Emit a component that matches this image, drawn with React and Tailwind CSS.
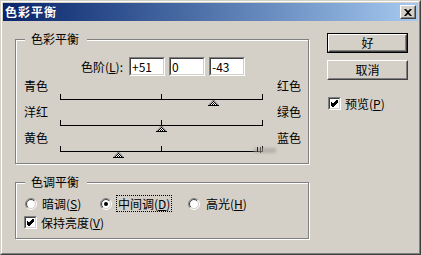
const font = "font-['Noto_Sans_CJK_SC','Liberation_Sans',sans-serif]";

function Sunken({ className = "", children }) {
  return (
    <div className={`border border-t-[#808080] border-l-[#808080] border-r-white border-b-white ${className}`}>
      <div className="w-full h-full border border-t-[#404040] border-l-[#404040] border-r-[#d4d0c8] border-b-[#d4d0c8] bg-white">
        {children}
      </div>
    </div>
  );
}

function CheckBox() {
  return (
    <Sunken className="w-[13px] h-[13px] shrink-0">
      <svg width="9" height="9" viewBox="0 0 9 9" className="block">
        <path d="M1 3.5 L3 5.5 L7.5 1 M1 4.5 L3 6.5 L7.5 2 M1 5.5 L3 7.5 L7.5 3" stroke="#000" strokeWidth="1" fill="none" shapeRendering="crispEdges" />
      </svg>
    </Sunken>
  );
}

function Radio({ on }) {
  return (
    <svg width="12" height="12" viewBox="0 0 12 12" className="block shrink-0">
      <defs>
        <linearGradient id="rOut" x1="0" y1="0" x2="1" y2="1">
          <stop offset="0.5" stopColor="#808080" />
          <stop offset="0.5" stopColor="#ffffff" />
        </linearGradient>
        <linearGradient id="rIn" x1="0" y1="0" x2="1" y2="1">
          <stop offset="0.5" stopColor="#404040" />
          <stop offset="0.5" stopColor="#d4d0c8" />
        </linearGradient>
      </defs>
      <circle cx="6" cy="6" r="5.5" fill="none" stroke="url(#rOut)" />
      <circle cx="6" cy="6" r="4.5" fill="#fff" stroke="url(#rIn)" />
      {on && <circle cx="6" cy="6" r="2" fill="#000" />}
    </svg>
  );
}

function Button({ label, isDefault }) {
  return (
    <div className={`w-[81px] h-[20px] ${isDefault ? "border border-black" : ""}`}>
      <div className="w-full h-full border border-t-white border-l-white border-r-[#404040] border-b-[#404040]">
        <div className="w-full h-full border border-t-[#d4d0c8] border-l-[#d4d0c8] border-r-[#808080] border-b-[#808080] flex items-center justify-center text-[12px] leading-[14px] text-black">
          {label}
        </div>
      </div>
    </div>
  );
}

function Thumb() {
  return (
    <svg width="11" height="6" viewBox="0 0 11 6" className="block">
      <defs>
        <pattern id="dith" width="2" height="2" patternUnits="userSpaceOnUse">
          <rect width="2" height="2" fill="#ffffff" />
          <rect width="1" height="1" fill="#000" />
          <rect x="1" y="1" width="1" height="1" fill="#000" />
        </pattern>
      </defs>
      <polygon points="5.5,0 11,6 0,6" fill="url(#dith)" />
      <polygon points="5.5,0 11,6 0,6" fill="none" stroke="#333" strokeWidth="0.6" />
      <rect x="0" y="5" width="11" height="1" fill="#000" />
    </svg>
  );
}

function Slider({ left, right, value, smudge }) {
  const pos = Math.round(101 + (value / 100) * 101);
  return (
    <div className="h-[26px]">
      <div className="flex justify-between pl-[8px] pr-[7px] h-[14px] leading-[14px]">
        <span>{left}</span>
        <span>{right}</span>
      </div>
      <div className="relative ml-[44px] w-[203px] h-[12px]">
        <div className="absolute left-0 top-[1px] w-[203px] h-[6px] border-l border-r border-b border-black" />
        <div className="absolute left-[101px] top-[1px] w-px h-[5px] bg-black" />
        <div className="absolute top-[7px]" style={{ left: pos - 5 }}>
          <Thumb />
        </div>
        {smudge && (
          <>
            <div className="absolute left-[194px] top-[3px] w-[22px] h-[5px] bg-[#a8a49c] blur-[1.5px] opacity-70" />
            <div className="absolute left-[197px] top-[2px] w-px h-[5px] bg-[#222]" />
            <div className="absolute left-[200px] top-[2px] w-px h-[6px] bg-[#555]" />
          </>
        )}
      </div>
    </div>
  );
}

function Group({ title, className = "", children }) {
  return (
    <div className={`relative border border-[#808080] shadow-[1px_1px_0_#ffffff,inset_1px_1px_0_#ffffff] ${className}`}>
      <span className="absolute left-[9px] -top-[8px] pl-[6px] pr-[8px] h-[14px] leading-[14px] bg-[#d4d0c8]">{title}</span>
      {children}
    </div>
  );
}

export default function App() {
  return (
    <div className={`${font} w-[421px] h-[255px] bg-[#d4d0c8] text-[12px] text-black border border-t-[#d4d0c8] border-l-[#d4d0c8] border-r-[#404040] border-b-[#404040]`}>
      <div className="w-full h-full border border-t-white border-l-white border-r-[#808080] border-b-[#808080] p-px">
        <div className="h-[18px] flex items-center justify-between bg-linear-to-r from-[#0a246a] to-[#a6caf0]">
          <span className="ml-[2px] text-white font-bold text-[12px] leading-[14px] tracking-[1px]">色彩平衡</span>
          <div className="mr-[2px] w-[16px] h-[14px] border border-t-white border-l-white border-r-[#404040] border-b-[#404040] bg-[#d4d0c8]">
            <div className="w-full h-full border border-t-[#d4d0c8] border-l-[#d4d0c8] border-r-[#808080] border-b-[#808080] flex items-center justify-center">
              <svg width="8" height="7" viewBox="0 0 8 7" className="block">
                <path d="M0 0h2l2 2 2-2h2L5 3.5 8 7H6L4 5 2 7H0l3-3.5z" fill="#000" />
              </svg>
            </div>
          </div>
        </div>

        <div className="flex">
          <div className="ml-[12px] w-[294px]">
            <Group title="色彩平衡" className="mt-[18px] h-[125px]">
              <div className="flex items-center mt-[17px] h-[19px]">
                <span className="w-[107px] text-right leading-[14px]">
                  色阶(<u>L</u>):
                </span>
                <div className="flex gap-[4px] ml-[6px]">
                  {["+51", "0", "-43"].map((v) => (
                    <Sunken key={v} className="w-[36px] h-[19px]">
                      <div className="pl-[1px] leading-[15px]">{v}</div>
                    </Sunken>
                  ))}
                </div>
              </div>
              <div className="mt-[3px]">
                <Slider left="青色" right="红色" value={51} />
                <Slider left="洋红" right="绿色" value={0} />
                <Slider left="黄色" right="蓝色" value={-43} smudge />
              </div>
            </Group>

            <Group title="色调平衡" className="mt-[18px] h-[57px]">
              <div className="flex items-center mt-[12px] h-[17px] pl-[9px]">
                <div className="w-[75px] flex items-center gap-[3px]">
                  <Radio />
                  <span className="border border-transparent px-px leading-[14px]">暗调(<u>S</u>)</span>
                </div>
                <div className="w-[88px] flex items-center gap-[4px]">
                  <Radio on />
                  <span className="border border-dotted border-black px-px leading-[15px]">中间调(<u>D</u>)</span>
                </div>
                <div className="flex items-center gap-[4px]">
                  <Radio />
                  <span className="border border-transparent px-px leading-[14px]">高光(<u>H</u>)</span>
                </div>
              </div>
              <div className="flex items-center gap-[4px] mt-[4px] h-[13px] pl-[8px]">
                <CheckBox />
                <span className="leading-[14px]">保持亮度(<u>V</u>)</span>
              </div>
            </Group>
          </div>

          <div className="ml-[18px] mt-[12px] flex flex-col">
            <Button label="好" isDefault />
            <div className="mt-[7px]">
              <Button label="取消" />
            </div>
            <div className="mt-[17px] ml-px flex items-center gap-[4px] h-[13px]">
              <CheckBox />
              <span className="leading-[14px]">预览(<u>P</u>)</span>
            </div>
          </div>
        </div>
      </div>
    </div>
  );
}
